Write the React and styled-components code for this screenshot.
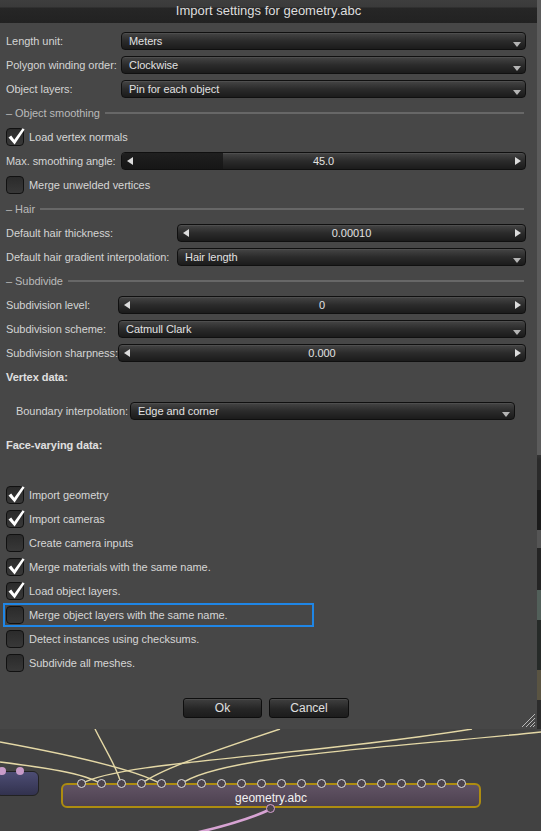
import React from 'react'
import styled, { createGlobalStyle } from 'styled-components'

const GlobalStyle = createGlobalStyle`
  body {
    margin: 0;
    background-color: #434343;
    font-family: "Liberation Sans", Arial, sans-serif;
    font-size: 11px;
    color: #d6d6d6;
  }
`

const Screen = styled.div`
  width: 541px;
  height: 831px;
  overflow: hidden;
  display: flex;
  flex-direction: column;
`
const Top = styled.div`
  display: flex;
  height: 729px;
`
const Strip = styled.div`
  flex: 1;
  background: linear-gradient(
    #5b5b5b 0, #5b5b5b 455px, #333 455px, #2a2a2a 460px, #2a2a2a 490px,
    #1b1b1b 490px, #1b1b1b 530px, #555 530px, #555 548px, #242424 548px,
    #242424 590px, #52605a 590px, #52605a 620px, #262a28 620px, #262a28 670px,
    #5a5442 670px, #5a5442 700px, #2c2c2c 700px
  );
`
const Dialog = styled.div`
  position: relative;
  width: 537px;
  background-color: #474747;
  display: flex;
  flex-direction: column;
`
const TitleBar = styled.div`
  height: 23px;
  line-height: 22px;
  text-align: center;
  font-size: 13px;
  color: #dedede;
  background: linear-gradient(#3e3e3e 0, #3a3a3a 7px, #262626 8px, #222 23px);
`
const Body = styled.div`
  padding: 6px 11px 0 6px;
  display: flex;
  flex-direction: column;
  letter-spacing: -0.05px;
`
const FieldGrid = styled.div`
  display: grid;
  grid-template-columns: ${p => p.$label}px 1fr;
  grid-auto-rows: 24px;
  align-items: center;
  padding-left: ${p => p.$indent || 0}px;
  margin-right: ${p => p.$trim || 0}px;
  margin-top: ${p => p.$top || 0}px;
`
const Label = styled.span`
  white-space: nowrap;
  color: #d4d4d4;
`
const Control = styled.div`
  position: relative;
  height: 18px;
  box-sizing: border-box;
  border: 1px solid #101010;
  border-radius: 4px;
  background: linear-gradient(#454545, #2b2b2b 50%, #1b1b1b);
  box-shadow: inset 0 1px 0 rgba(255, 255, 255, 0.06);
  color: #e2e2e2;
  line-height: 16px;
`
const Select = styled(Control)`
  padding-left: 7px;
  &::after {
    content: '';
    position: absolute;
    right: 4px;
    bottom: 2px;
    border-left: 4px solid transparent;
    border-right: 4px solid transparent;
    border-top: 5px solid #b4b4b4;
  }
`
const SliderBox = styled(Control)`
  text-align: center;
  overflow: hidden;
  &::before, &::after {
    content: '';
    position: absolute;
    top: 4px;
    border-top: 4px solid transparent;
    border-bottom: 4px solid transparent;
    z-index: 1;
  }
  &::before {
    left: 5px;
    border-right: 6px solid #dcdcdc;
  }
  &::after {
    right: 4px;
    border-left: 6px solid #dcdcdc;
  }
`
const SliderFill = styled.div`
  position: absolute;
  left: 0;
  top: 0;
  bottom: 0;
  background: linear-gradient(#1f1f1f, #161616);
`
const SliderValue = styled.span`
  position: relative;
`
const SectionTitle = styled.div`
  height: 24px;
  display: flex;
  align-items: center;
  gap: 5px;
  margin-right: 2px;
  color: #bababa;
  &::after {
    content: '';
    flex: 1;
    height: 2px;
    background-color: #676767;
  }
`
const Heading = styled.div`
  height: 24px;
  line-height: 24px;
  font-weight: bold;
  color: #e0e0e0;
  margin-top: ${p => p.$top || 0}px;
`
const CheckRow = styled.div`
  width: 311px;
  height: 24px;
  box-sizing: border-box;
  margin-left: -3px;
  padding-left: 1px;
  border: 2px solid ${p => (p.$focus ? '#1f86e6' : 'transparent')};
  display: flex;
  align-items: center;
  gap: 5px;
  color: #d6d6d6;
`
const CheckBox = styled.div`
  width: 18px;
  height: 18px;
  box-sizing: border-box;
  border: 1px solid #111;
  border-radius: 4px;
  background: linear-gradient(#2b2b2b, #383838);
  position: relative;
  svg {
    position: absolute;
    left: 0;
    top: -1px;
    overflow: visible;
  }
`
const CheckList = styled.div`
  margin-top: ${p => p.$top || 0}px;
  display: flex;
  flex-direction: column;
`
const Buttons = styled.div`
  display: flex;
  justify-content: center;
  gap: 7px;
  margin-top: 23px;
  padding-right: 5px;
`
const Button = styled.button`
  width: ${p => p.$w}px;
  height: 20px;
  padding: 0;
  border: 1px solid #0e0e0e;
  border-radius: 3px;
  background: linear-gradient(#3f3f3f, #262626 55%, #1c1c1c);
  box-shadow: inset 0 1px 0 rgba(255, 255, 255, 0.07);
  color: #e0e0e0;
  font-family: "Liberation Sans", Arial, sans-serif;
  font-size: 12px;
`
const Grip = styled.svg`
  position: absolute;
  right: 1px;
  bottom: 1px;
`

const Graph = styled.div`
  position: relative;
  flex: 1;
  background-color: #424242;
  overflow: hidden;
`
const Wires = styled.svg`
  position: absolute;
  left: 0;
  top: 0;
`
const GeoNode = styled.div`
  position: absolute;
  left: 61px;
  top: 54px;
  width: 420px;
  height: 25px;
  box-sizing: border-box;
  border: 2px solid #ad8c10;
  border-radius: 6px;
  background: linear-gradient(#615364, #4d4150);
  color: #f2f2f2;
  font-size: 12px;
  text-align: center;
  line-height: 26px;
`
const Pins = styled.div`
  position: absolute;
  left: 0;
  right: 0;
  top: -6.5px;
  padding: 0 13.5px;
  display: flex;
  justify-content: space-between;
`
const Pin = styled.div`
  width: 9px;
  height: 9px;
  box-sizing: border-box;
  border: 1.5px solid ${p => p.$color || '#dedede'};
  border-radius: 50%;
  background-color: #4b424c;
`
const OutPin = styled(Pin)`
  position: absolute;
  left: 203px;
  bottom: -7px;
`
const SideNode = styled.div`
  position: absolute;
  left: -5px;
  top: 42px;
  width: 44px;
  height: 25px;
  box-sizing: border-box;
  border: 1px solid #222;
  border-radius: 6px;
  background: linear-gradient(#4d4d74, #32324e);
`
const Dot = styled.div`
  position: absolute;
  top: -5px;
  left: ${p => p.$x}px;
  width: 8px;
  height: 8px;
  border-radius: 50%;
  background-color: #c99cc9;
`

function Dropdown({ children }) {
  return <Select>{children}</Select>
}

function Slider({ value, fill = 0 }) {
  return (
    <SliderBox>
      {fill > 0 && <SliderFill style={{ width: fill + '%' }} />}
      <SliderValue>{value}</SliderValue>
    </SliderBox>
  )
}

function Check({ checked, focus, children }) {
  return (
    <CheckRow $focus={focus}>
      <CheckBox>
        {checked && (
          <svg width="18" height="18" viewBox="0 0 18 18">
            <path d="M1.5 9.5 L4.2 7.4 L7.3 11.8 L15.6 0.2 L17.6 1.6 L7.6 16.4 Z" fill="#fff" />
          </svg>
        )}
      </CheckBox>
      {children}
    </CheckRow>
  )
}

const checks = [
  ['Import geometry', true],
  ['Import cameras', true],
  ['Create camera inputs', false],
  ['Merge materials with the same name.', true],
  ['Load object layers.', true],
  ['Merge object layers with the same name.', false, true],
  ['Detect instances using checksums.', false],
  ['Subdivide all meshes.', false],
]

export default function App() {
  const pinCount = 20
  return (
    <>
      <GlobalStyle />
      <Screen>
        <Top>
          <Dialog>
            <TitleBar>Import settings for geometry.abc</TitleBar>
            <Body>
              <FieldGrid $label={115}>
                <Label>Length unit:</Label>
                <Dropdown>Meters</Dropdown>
                <Label>Polygon winding order:</Label>
                <Dropdown>Clockwise</Dropdown>
                <Label>Object layers:</Label>
                <Dropdown>Pin for each object</Dropdown>
              </FieldGrid>

              <SectionTitle>– Object smoothing</SectionTitle>
              <Check checked>Load vertex normals</Check>
              <FieldGrid $label={115}>
                <Label>Max. smoothing angle:</Label>
                <Slider value="45.0" fill={25} />
              </FieldGrid>
              <Check>Merge unwelded vertices</Check>

              <SectionTitle>– Hair</SectionTitle>
              <FieldGrid $label={171}>
                <Label>Default hair thickness:</Label>
                <Slider value="0.00010" />
                <Label>Default hair gradient interpolation:</Label>
                <Dropdown>Hair length</Dropdown>
              </FieldGrid>

              <SectionTitle>– Subdivide</SectionTitle>
              <FieldGrid $label={112}>
                <Label>Subdivision level:</Label>
                <Slider value="0" />
                <Label>Subdivision scheme:</Label>
                <Dropdown>Catmull Clark</Dropdown>
                <Label>Subdivision sharpness:</Label>
                <Slider value="0.000" />
              </FieldGrid>

              <Heading>Vertex data:</Heading>
              <FieldGrid $label={114} $indent={10} $trim={11} $top={10}>
                <Label>Boundary interpolation:</Label>
                <Dropdown>Edge and corner</Dropdown>
              </FieldGrid>
              <Heading $top={10}>Face-varying data:</Heading>

              <CheckList $top={26}>
                {checks.map(([text, on, focus]) => (
                  <Check key={text} checked={on} focus={focus}>{text}</Check>
                ))}
              </CheckList>
            </Body>
            <Buttons>
              <Button $w={79}>Ok</Button>
              <Button $w={80}>Cancel</Button>
            </Buttons>
            <Grip width="16" height="16" viewBox="0 0 16 16">
              <path d="M15 2 L2 15 M15 6 L6 15 M15 10 L10 15 M15 13 L13 15" stroke="#b8b8b8" strokeWidth="1" />
            </Grip>
          </Dialog>
          <Strip />
        </Top>

        <Graph>
          <Wires width="541" height="102" viewBox="0 0 541 102">
            <g stroke="#e4d8a6" strokeWidth="1.4" fill="none">
              <path d="M95 0 C106 22 118 40 121 55" />
              <path d="M0 13 C60 24 135 40 161 55" />
              <path d="M0 33 C40 38 85 44 101 55" />
              <path d="M280 0 C220 20 160 40 141 55" />
              <path d="M472 0 C300 28 120 32 81 55" />
              <path d="M541 3 C400 18 220 26 181 55" />
            </g>
            <path d="M271 80 C250 90 225 97 195 104" stroke="#d7a3d3" strokeWidth="2.6" fill="none" />
          </Wires>
          <SideNode>
            <Dot $x={2} />
            <Dot $x={20} />
          </SideNode>
          <GeoNode>
            <Pins>
              {Array.from({ length: pinCount }, (_, i) => <Pin key={i} />)}
            </Pins>
            geometry.abc
            <OutPin $color="#d7a3d3" />
          </GeoNode>
        </Graph>
      </Screen>
    </>
  )
}
